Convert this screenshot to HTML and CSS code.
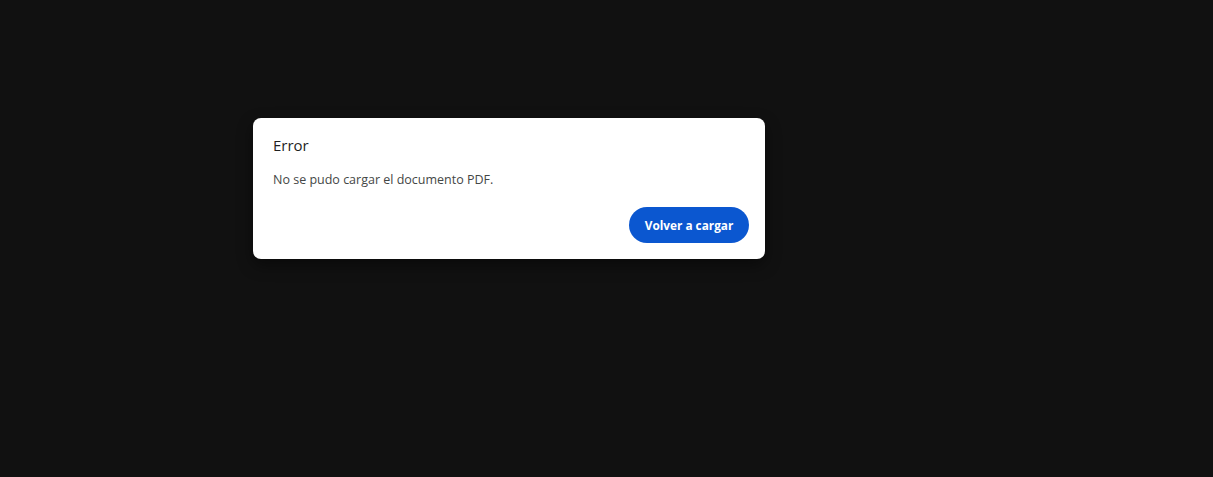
FILE: index.html
```html
<!DOCTYPE html>
<html lang="es">
<head>
<meta charset="utf-8">
<link rel="stylesheet" href="styles.css">
</head>
<body>
<div class="page">
  <div class="dialog" role="alertdialog">
    <div class="title">Error</div>
    <div class="message">No se pudo cargar el documento PDF.</div>
    <div class="actions">
      <button class="reload">Volver a cargar</button>
    </div>
  </div>
</div>
</body>
</html>
```
FILE: styles.css
```css
html, body {
  margin: 0;
  padding: 0;
  background: #111111;
  height: 100%;
}
.page {
  padding-top: 118px;
  padding-left: 253px;
}
.dialog {
  width: 512px;
  box-sizing: border-box;
  background: #ffffff;
  border-radius: 8px;
  padding: 17px 16px 16px 20px;
  box-shadow: 0 6px 16px rgba(0, 0, 0, 0.45);
  font-family: "Open Sans", "Noto Sans", sans-serif;
}
.title {
  font-size: 15px;
  line-height: 20px;
  color: #1f1f1f;
}
.message {
  margin-top: 15px;
  font-size: 12.5px;
  line-height: 20px;
  color: #444746;
}
.actions {
  display: flex;
  justify-content: flex-end;
  margin-top: 17px;
}
.reload {
  height: 36px;
  width: 120px;
  border: none;
  border-radius: 18px;
  background: #0b57d0;
  color: #ffffff;
  font-family: "Open Sans", "Noto Sans", sans-serif;
  font-weight: 700;
  font-size: 11.8px;
  padding: 0;
  cursor: pointer;
}
```
